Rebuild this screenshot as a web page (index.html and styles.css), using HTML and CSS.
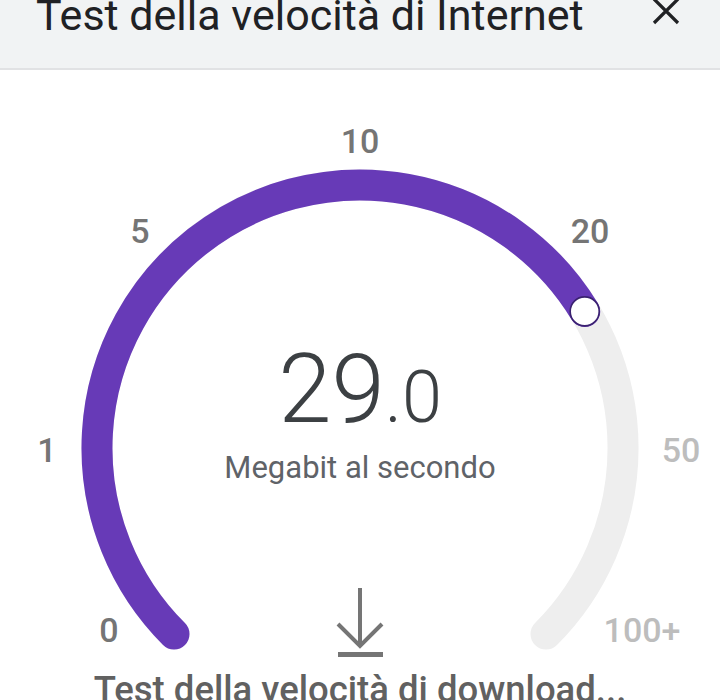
FILE: index.html
```html
<!DOCTYPE html>
<html lang="it">
<head>
<meta charset="utf-8">
<title>Test della velocità di Internet</title>
<link rel="stylesheet" href="styles.css">
</head>
<body>
<header class="topbar">
  <h1 class="title">Test della velocità di Internet</h1>
  <svg class="close" viewBox="0 0 28 28" width="28" height="28" aria-label="Chiudi">
    <path d="M2 2 L26 26 M26 2 L2 26" stroke="#202124" stroke-width="3.2" fill="none"/>
  </svg>
</header>
<main class="main">
  <div class="gauge">
    <svg class="dial" viewBox="0 70 720 588" width="720" height="588">
      <path d="M174 634 A263 263 0 1 1 546 634" fill="none" stroke="#eeeeee" stroke-width="31" stroke-linecap="round"/>
      <path d="M174 634 A263 263 0 1 1 584.7 311.4" fill="none" stroke="#673ab7" stroke-width="31" stroke-linecap="round"/>
      <circle cx="584.7" cy="311.4" r="14.5" fill="#ffffff" stroke="#3a2170" stroke-width="1.6"/>
      <g class="ticks">
        <text x="360" y="153">10</text>
        <text x="140" y="243">5</text>
        <text x="590" y="243">20</text>
        <text x="47" y="462">1</text>
        <text x="681" y="462" class="off">50</text>
        <text x="109" y="642">0</text>
        <text x="642" y="642" class="off">100+</text>
      </g>
    </svg>
    <div class="readout">
      <div class="value">29<span class="decimal">.0</span></div>
      <div class="unit">Megabit al secondo</div>
    </div>
    <svg class="download" viewBox="0 0 50 72" width="50" height="72" aria-hidden="true">
      <path d="M25 2 V60 M3 38 L25 60 L47 38" fill="none" stroke="#757575" stroke-width="4"/>
      <rect x="3" y="66" width="45" height="5" fill="#757575"/>
    </svg>
  </div>
  <p class="status">Test della velocità di download...</p>
</main>
</body>
</html>
```
FILE: styles.css
```css
html, body {
  margin: 0;
  padding: 0;
  background: #ffffff;
  font-family: Roboto, "Noto Sans", "Liberation Sans", sans-serif;
}
body {
  width: 720px;
  height: 700px;
  overflow: hidden;
}
.topbar {
  height: 68px;
  background: #f1f3f4;
  border-bottom: 2px solid #e1e2e4;
  display: flex;
  align-items: flex-start;
  padding: 0 40px 0 36px;
  overflow: hidden;
}
.title {
  margin: -10px 0 0 0;
  font-size: 43px;
  font-weight: 400;
  line-height: normal;
  color: #202124;
  white-space: nowrap;
}
.close {
  margin-left: auto;
  margin-top: -3px;
  flex: none;
}
.main {
  display: flex;
  flex-direction: column;
  align-items: center;
}
.gauge {
  position: relative;
  width: 720px;
  height: 588px;
}
.dial {
  display: block;
}
.ticks text {
  font-family: Roboto, "Noto Sans", "Liberation Sans", sans-serif;
  font-size: 34px;
  font-weight: 500;
  fill: #757575;
  text-anchor: middle;
}
.ticks text.off {
  fill: #bdbdbd;
}
.readout {
  position: absolute;
  left: 0;
  right: 0;
  top: 271px;
  display: flex;
  flex-direction: column;
  align-items: center;
}
.value {
  font-size: 96px;
  font-weight: 300;
  line-height: 96px;
  color: #3c4043;
}
.decimal {
  font-size: 72px;
  line-height: 72px;
}
.unit {
  margin-top: 13px;
  font-size: 31px;
  line-height: 36px;
  color: #5f6368;
}
.download {
  position: absolute;
  left: 335px;
  bottom: 0;
}
.status {
  margin: 11px 0 0 0;
  font-size: 36.5px;
  font-weight: 500;
  line-height: 42px;
  color: #616161;
  white-space: nowrap;
}
```
